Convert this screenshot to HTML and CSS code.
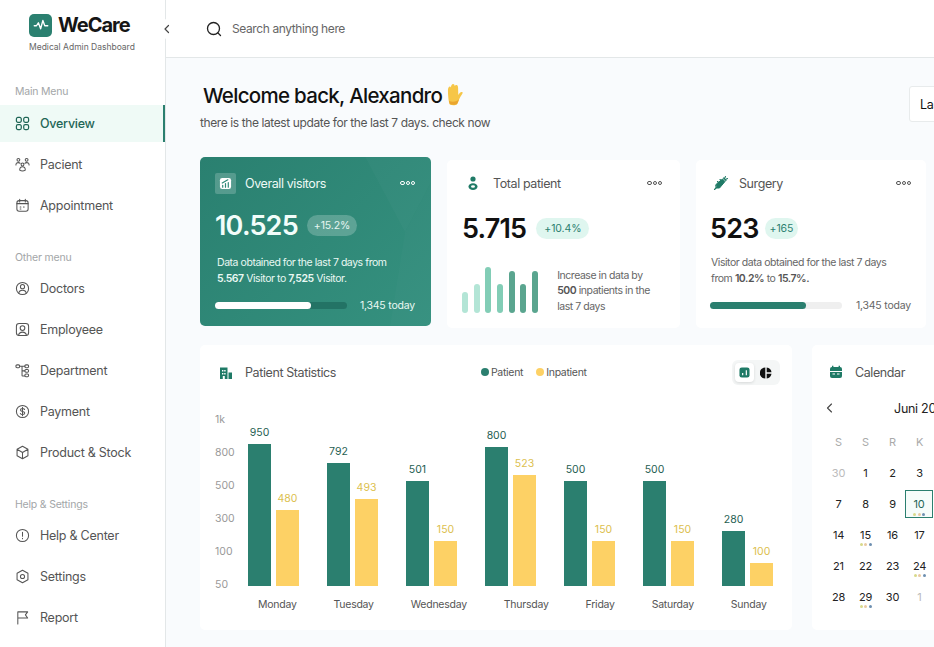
FILE: index.html
```html
<!DOCTYPE html>
<html lang="en">
<head>
  <meta charset="UTF-8" />
  <meta name="viewport" content="width=device-width, initial-scale=1.0"/>
  <title>WeCare - Medical Admin Dashboard</title>
  <link rel="stylesheet" href="styles.css">
</head>
<body>
  <div class="app">
    <aside class="sidebar">
      <div class="brand">
        <div class="brand-row">
          <span class="brand-logo">
            <svg viewBox="0 0 24 24" width="18" height="18" fill="none" stroke="#fff" stroke-width="1.8" stroke-linecap="round" stroke-linejoin="round"><path d="M3 13h3l2.500-4 3 8 3-11 2.500 7h4"/></svg>
          </span>
          <span class="brand-name">WeCare</span>
        </div>
        <div class="brand-sub">Medical Admin Dashboard</div>
      </div>

      <div class="nav-label">Main Menu</div>
      <a class="nav-item active">
        <svg class="nav-icon" viewBox="0 0 16 16"><rect x="1.500" y="1.500" width="5.200" height="5.200" rx="1.600"/><rect x="9.300" y="1.500" width="5.200" height="5.200" rx="1.600"/><rect x="1.500" y="9.300" width="5.200" height="5.200" rx="1.600"/><rect x="9.300" y="9.300" width="5.200" height="5.200" rx="1.600"/></svg>
        Overview
      </a>
      <a class="nav-item">
        <svg class="nav-icon" viewBox="0 0 16 16"><circle cx="3.600" cy="3" r="1.500"/><circle cx="12.400" cy="3" r="1.500"/><circle cx="8" cy="8" r="1.500"/><path d="M1 8.500c0-1.600 1-2.500 2.600-2.500 .8 0 1.400.2 1.900.7M15 8.500c0-1.600-1-2.500-2.600-2.500-.8 0-1.400.2-1.900.7M5 14c0-2 1.200-3.500 3-3.500s3 1.500 3 3.500c-1.800 1-4.200 1-6 0z"/></svg>
        Pacient
      </a>
      <a class="nav-item">
        <svg class="nav-icon" viewBox="0 0 16 16"><rect x="2" y="2.800" width="12" height="11.400" rx="2.400"/><path d="M5 1.300v3M11 1.300v3M2 6h12M5.500 9.500h.8M5.500 11.800h.8M9 9.500h.8"/></svg>
        Appointment
      </a>

      <div class="nav-label second">Other menu</div>
      <a class="nav-item">
        <svg class="nav-icon" viewBox="0 0 16 16"><circle cx="8" cy="8" r="6.500"/><circle cx="8" cy="6" r="2.200"/><path d="M4 13c.3-2.200 2-3.200 4-3.200s3.700 1 4 3.200"/></svg>
        Doctors
      </a>
      <a class="nav-item">
        <svg class="nav-icon" viewBox="0 0 16 16"><rect x="1.500" y="1.500" width="13" height="13" rx="3"/><circle cx="8" cy="6.500" r="2.500"/><path d="M3.800 14.300c.4-2.500 2.200-3.500 4.200-3.500s3.800 1 4.200 3.500"/></svg>
        Employeee
      </a>
      <a class="nav-item">
        <svg class="nav-icon" viewBox="0 0 16 16"><rect x="1" y="2" width="4" height="3" rx="1.200"/><rect x="10.500" y="2" width="4" height="3" rx="1.200"/><rect x="10.500" y="7" width="4" height="2.800" rx="1.200"/><rect x="10.500" y="11.800" width="4" height="2.800" rx="1.200"/><path d="M5 3.500h5.500M7.500 3.500v9.700c0 .4.300.6.600.6h2.400M7.500 8.400h3"/></svg>
        Department
      </a>
      <a class="nav-item">
        <svg class="nav-icon" viewBox="0 0 16 16"><circle cx="8" cy="8" r="6.500"/><path d="M10.200 5.800C9.800 5 9 4.700 8 4.700c-1.300 0-2.200.6-2.200 1.600 0 2.200 4.600 1.100 4.600 3.400 0 1-1 1.600-2.300 1.600-1.100 0-2-.4-2.400-1.200M8 3.600v8.800"/></svg>
        Payment
      </a>
      <a class="nav-item">
        <svg class="nav-icon" viewBox="0 0 16 16"><path d="M8 1.300l5.800 3.300v6.800L8 14.700l-5.800-3.300V4.600zM2.200 4.600L8 8l5.800-3.400M8 8v6.700"/></svg>
        Product &amp; Stock
      </a>

      <div class="nav-label second help">Help &amp; Settings</div>
      <a class="nav-item">
        <svg class="nav-icon" viewBox="0 0 16 16"><circle cx="8" cy="8" r="6.500"/><path d="M8 4.500v4.300M8 11v.4"/></svg>
        Help &amp; Center
      </a>
      <a class="nav-item">
        <svg class="nav-icon" viewBox="0 0 16 16"><path d="M8 1.300l5.800 3.300v6.800L8 14.700l-5.800-3.300V4.600z"/><circle cx="8" cy="8" r="2.200"/></svg>
        Settings
      </a>
      <a class="nav-item">
        <svg class="nav-icon" viewBox="0 0 16 16"><path d="M3 15V2h10.500l-2.400 3.200 2.400 3.300H3"/></svg>
        Report
      </a>
    </aside>

    <button class="collapse">
      <svg viewBox="0 0 10 10" width="10" height="10" fill="none" stroke="#444" stroke-width="1.200" stroke-linecap="round" stroke-linejoin="round"><path d="M6.500 1.500L3 5l3.500 3.500"/></svg>
    </button>

    <main class="main">
      <header class="topbar">
        <svg viewBox="0 0 16 16" width="16" height="16" fill="none" stroke="#222" stroke-width="1.300" stroke-linecap="round"><circle cx="7.500" cy="7.500" r="6"/><path d="M12 12l2.500 2.500"/></svg>
        <span class="search-text">Search anything here</span>
      </header>

      <div class="content">
        <div class="greeting">
          <div class="welcome">
            <h1>Welcome back, Alexandro
              <svg class="hand" viewBox="0 0 20 24"><path fill="#f6c648" d="M5 22c-.8-1.500-1.300-4-1.500-6.500-.3-3-.5-6-.4-8.500.1-2 1-3.500 2-3.500 .6 0 1 .4 1.100 1 .2-1.800 1.100-3.500 2.300-3.500 1.100 0 1.600 1 1.700 2 .5-.8 1.200-1.200 2-1 1.100.2 1.600 1.500 1.600 3.500 0 2 .2 5 .2 7 .8-1.500 2.200-3 3.400-3.200 1-.1 1.500.6 1.100 1.500-1 2-2.800 4.300-3.800 6.700-.6 1.800-1.100 3.500-2.200 5-1.500 1-5.500 1-7.500 0z"/><path fill="#eaa52f" d="M5 22c2 1 6 1 7.500 0 1.100-1.500 1.600-3.200 2.200-5-2 2.300-6 3.300-10.500 1.800 .2 1.200.5 2.300.8 3.200z"/></svg>
            </h1>
            <p>there is the latest update for the last 7 days. check now</p>
          </div>
          <button class="range">Last 7 days</button>
        </div>

        <section class="stats">
          <article class="card-visitors">
            <svg class="wave" viewBox="0 0 231 169" preserveAspectRatio="none"><path d="M160 -10L205 75 231 25V-10z" fill="#fff" opacity=".025"/><path d="M205 75L231 25V169H190z" fill="#fff" opacity=".015"/></svg>
            <div class="stat-head">
              <span class="stat-icon glass">
                <svg viewBox="0 0 14 14" width="13" height="13"><rect x="1" y="1" width="12" height="12" rx="2.500" fill="#fff"/><path d="M4 11V9M7 11V7M10 11V6M3.500 6.500L9.500 3" stroke="#2f8a78" stroke-width="1.300" stroke-linecap="round" fill="none"/></svg>
              </span>
              <span class="stat-title">Overall visitors</span>
              <span class="dots"><i></i><i></i><i></i></span>
            </div>
            <div class="stat-value">
              <strong>10.525</strong>
              <span class="pill glass-pill">+15.2%</span>
            </div>
            <p class="stat-text">Data obtained for the last 7 days from<br><b>5.567</b> Visitor to <b>7,525</b> Visitor.</p>
            <div class="stat-progress">
              <div class="track dark"><div class="fill white" style="width:73%"></div></div>
              <span>1,345 today</span>
            </div>
          </article>

          <article class="card-white patient">
            <div class="stat-head">
              <span class="stat-icon">
                <svg viewBox="0 0 14 14" width="14" height="14" fill="#1f7a66"><circle cx="7" cy="3" r="2.600"/><path d="M2.500 10.500c0-2 2-3.300 4.500-3.300s4.500 1.300 4.500 3.300S9.500 14 7 14s-4.500-1.500-4.500-3.500z"/><ellipse cx="7" cy="10.500" rx="2" ry="1.200" fill="#fff"/></svg>
              </span>
              <span class="stat-title">Total patient</span>
              <span class="dots"><i></i><i></i><i></i></span>
            </div>
            <div class="stat-value">
              <strong>5.715</strong>
              <span class="pill">+10.4%</span>
            </div>
            <div class="mini-row">
              <div class="mini-bars">
                <i style="height:21px;background:#b3e5d6"></i>
                <i style="height:29px;background:#b3e5d6"></i>
                <i style="height:46px;background:#82cdb6"></i>
                <i style="height:29px;background:#82cdb6"></i>
                <i style="height:42px;background:#5aa58f"></i>
                <i style="height:29px;background:#5aa58f"></i>
                <i style="height:42px;background:#5aa58f"></i>
              </div>
              <p class="stat-text">Increase in data by<br><b>500</b> inpatients in the<br>last 7 days</p>
            </div>
          </article>

          <article class="card-white surgery">
            <div class="stat-head">
              <span class="stat-icon">
                <svg viewBox="0 0 16 16" width="16" height="16" fill="none" stroke="#1f7a66" stroke-linecap="round"><path d="M3 9.500L9.500 4l2.500 2.500-5.500 6.500H3.500z" fill="#1f7a66" stroke-width="1"/><path d="M1.500 14.500l2-2M10.500 3l2.500 2.500M12.500 1.500l-1 2M14.500 3.500l-2 1M4.500 6.500l1 1M7 4.500l1 1" stroke-width="1.100"/></svg>
              </span>
              <span class="stat-title">Surgery</span>
              <span class="dots"><i></i><i></i><i></i></span>
            </div>
            <div class="stat-value">
              <strong>523</strong>
              <span class="pill small">+165</span>
            </div>
            <p class="stat-text">Visitor data obtained for the last 7 days<br>from <b>10.2%</b> to <b>15.7%.</b></p>
            <div class="stat-progress">
              <div class="track"><div class="fill" style="width:73%"></div></div>
              <span>1,345 today</span>
            </div>
          </article>
        </section>

        <section class="lower">
          <article class="chart-card">
            <div class="chart-head">
              <svg viewBox="0 0 14 14" width="14" height="14" fill="#1f7a66"><path d="M1 1.500h7.500V13H1z"/><path d="M9.500 6.500H13V13H9.500z"/><path d="M3 4h1.400v1.400H3zM5.200 4h1.400v1.400H5.200zM3 7h1.400v1.400H3zM5.200 7h1.400v1.400H5.200zM3.800 10h2v3h-2z" fill="#fff"/></svg>
              <span class="stat-title">Patient Statistics</span>
              <div class="legend">
                <span><i class="green"></i>Patient</span>
                <span><i class="yellow"></i>Inpatient</span>
              </div>
              <div class="toggle">
                <span class="toggle-btn on">
                  <svg viewBox="0 0 12 12" width="11" height="11"><rect x=".5" y=".5" width="11" height="11" rx="2.500" fill="#1f7a66"/><path d="M4 9V6.500M8 9V3.500" stroke="#fff" stroke-width="1.300"/></svg>
                </span>
                <span class="toggle-btn">
                  <svg viewBox="0 0 12 12" width="12" height="12" fill="#111"><path d="M5.300 .5v11A5.500 5.500 0 0 1 5.300 .5z"/><path d="M6.700 .5A5.500 5.500 0 0 1 11.500 5.200H6.700z"/><path d="M6.700 6.800h4.800a5.500 5.500 0 0 1-4.800 4.700z"/></svg>
                </span>
              </div>
            </div>

            <div class="plot">
              <div class="y-axis"><span>1k</span><span>800</span><span>500</span><span>300</span><span>100</span><span>50</span></div>
              <div class="bars">
                <div class="group">
                  <div class="bar-col"><em>950</em><div class="bar green" style="height:142px"></div></div>
                  <div class="bar-col"><em class="amber">480</em><div class="bar yellow" style="height:76px"></div></div>
                </div>
                <div class="group">
                  <div class="bar-col"><em>792</em><div class="bar green" style="height:123px"></div></div>
                  <div class="bar-col"><em class="amber">493</em><div class="bar yellow" style="height:87px"></div></div>
                </div>
                <div class="group">
                  <div class="bar-col"><em>501</em><div class="bar green" style="height:105px"></div></div>
                  <div class="bar-col"><em class="amber">150</em><div class="bar yellow" style="height:45px"></div></div>
                </div>
                <div class="group">
                  <div class="bar-col"><em>800</em><div class="bar green" style="height:139px"></div></div>
                  <div class="bar-col"><em class="amber">523</em><div class="bar yellow" style="height:111px"></div></div>
                </div>
                <div class="group">
                  <div class="bar-col"><em>500</em><div class="bar green" style="height:105px"></div></div>
                  <div class="bar-col"><em class="amber">150</em><div class="bar yellow" style="height:45px"></div></div>
                </div>
                <div class="group">
                  <div class="bar-col"><em>500</em><div class="bar green" style="height:105px"></div></div>
                  <div class="bar-col"><em class="amber">150</em><div class="bar yellow" style="height:45px"></div></div>
                </div>
                <div class="group">
                  <div class="bar-col"><em>280</em><div class="bar green" style="height:55px"></div></div>
                  <div class="bar-col"><em class="amber">100</em><div class="bar yellow" style="height:23px"></div></div>
                </div>
              </div>
            </div>
            <div class="days">
              <span>Monday</span><span>Tuesday</span><span>Wednesday</span><span>Thursday</span><span>Friday</span><span>Saturday</span><span>Sunday</span>
            </div>
          </article>

          <article class="calendar-card">
            <div class="cal-head">
              <svg viewBox="0 0 14 14" width="14" height="14" fill="#1f7a66"><path d="M3 .8h1.400v2H3zM9.600 .8H11v2H9.600z"/><rect x="1" y="2" width="12" height="11" rx="2"/><path d="M1 6h12v.9H1zM3.500 8.500h2.500v1H3.500zM8 8.500h2.500v1H8z" fill="#fff"/></svg>
              <span class="stat-title">Calendar</span>
            </div>
            <div class="cal-month">
              <svg viewBox="0 0 10 10" width="10" height="10" fill="none" stroke="#444" stroke-width="1.100" stroke-linecap="round" stroke-linejoin="round"><path d="M6.500 1L2.500 5l4 4"/></svg>
              <span>Juni 2024</span>
              <svg viewBox="0 0 10 10" width="10" height="10" fill="none" stroke="#444" stroke-width="1.100" stroke-linecap="round" stroke-linejoin="round"><path d="M3.500 1l4 4-4 4"/></svg>
            </div>
            <div class="cal-grid">
              <span class="wd">S</span><span class="wd">S</span><span class="wd">R</span><span class="wd">K</span><span class="wd">J</span><span class="wd">S</span><span class="wd">M</span>
              <span class="off">30</span><span>1</span><span>2</span><span>3</span><span>4</span><span>5</span><span>6</span>
              <span>7</span><span>8</span><span>9</span><span class="today">10<u class="marks"><i></i><i></i><i></i></u></span><span>11</span><span>12</span><span>13</span>
              <span>14</span><span>15<u class="marks"><i></i><i></i><i></i></u></span><span>16</span><span>17</span><span>18</span><span>19</span><span>20</span>
              <span>21</span><span>22</span><span>23</span><span>24<u class="marks"><i></i><i></i><i></i></u></span><span>25</span><span>26</span><span>27</span>
              <span>28</span><span>29<u class="marks"><i></i><i></i><i></i></u></span><span>30</span><span class="off">1</span><span class="off">2</span><span class="off">3</span><span class="off">4</span>
            </div>
          </article>
        </section>
      </div>
    </main>
  </div>
</body>
</html>
```

FILE: styles.css
```css
* {
  box-sizing: border-box;
  font-family: 'Inter', 'Noto Sans', sans-serif;
}

body {
  margin: 0;
  background: #f9fbfd;
}

.app {
  position: relative;
  display: flex;
  width: 934px;
  height: 647px;
  overflow: hidden;
}

/* sidebar */
.sidebar {
  flex: 0 0 166px;
  background: #fff;
  border-right: 1px solid #e3e7e8;
}

.brand {
  padding: 13px 0 0 29px;
  height: 85px;
}

.brand-row {
  display: flex;
  align-items: center;
  gap: 6px;
  height: 24px;
}

.brand-logo {
  display: flex;
  align-items: center;
  justify-content: center;
  width: 23px;
  height: 23px;
  border-radius: 5px;
  background: #2b8070;
}

.brand-name {
  font-size: 20px;
  font-weight: 700;
  letter-spacing: -1px;
  color: #161616;
}

.brand-sub {
  margin-top: 4px;
  font-size: 8.5px;
  line-height: 12px;
  color: #666;
  white-space: nowrap;
}

.nav-label {
  padding-left: 15px;
  font-size: 10.5px;
  line-height: 14px;
  letter-spacing: -0.2px;
  color: #a3a6a8;
  margin-bottom: 6px;
}

.nav-label.second {
  margin-top: 26.500px;
  margin-bottom: 5px;
}

.nav-label.help {
  margin-top: 27.500px;
}

.nav-item {
  display: flex;
  align-items: center;
  gap: 10px;
  height: 37px;
  margin: 4px 0;
  padding-left: 15px;
  font-size: 12.5px;
  letter-spacing: -0.25px;
  color: #555;
}

.nav-item.active {
  background: #effaf6;
  border-right: 2px solid #2b7f6f;
  color: #1f6656;
  font-weight: 500;
}

.nav-icon {
  width: 15px;
  height: 15px;
  fill: none;
  stroke: currentColor;
  stroke-width: 1.100;
  stroke-linecap: round;
  stroke-linejoin: round;
}

.active .nav-icon {
  stroke-width: 1.300;
}

.collapse {
  position: absolute;
  left: 157px;
  top: 19px;
  width: 20px;
  height: 20px;
  padding: 0;
  display: flex;
  align-items: center;
  justify-content: center;
  border: none;
  border-radius: 50%;
  background: #fff;
}

/* main */
.main {
  flex: 1;
  min-width: 0;
}

.topbar {
  display: flex;
  align-items: center;
  gap: 10px;
  height: 58px;
  padding-left: 40px;
  background: #fff;
  border-bottom: 1px solid #e3e7e8;
}

.search-text {
  font-size: 12px;
  letter-spacing: -0.4px;
  color: #666;
}

.content {
  padding: 24px 0 0 34px;
}

.greeting {
  display: flex;
  align-items: flex-start;
  height: 75px;
}

.welcome {
  flex: 0 0 709px;
}

.welcome h1 {
  display: flex;
  align-items: center;
  gap: 3px;
  margin: 0 0 0 3px;
  font-size: 20.5px;
  line-height: 28px;
  font-weight: 500;
  letter-spacing: -0.7px;
  color: #111;
}

.hand {
  width: 19px;
  height: 23px;
  margin-top: -3px;
}

.welcome p {
  margin: 5px 0 0;
  font-size: 12px;
  line-height: 16px;
  letter-spacing: -0.4px;
  color: #555;
}

.range {
  flex: 0 0 100px;
  height: 36px;
  margin-top: 4px;
  padding: 0 0 0 10px;
  text-align: left;
  font-size: 12.5px;
  letter-spacing: -0.3px;
  color: #111;
  background: #fff;
  border: 1px solid #e8ebec;
  border-radius: 3px;
}

.stats {
  display: flex;
  gap: 16px;
}

.card-visitors {
  position: relative;
  flex: 0 0 231px;
  height: 169px;
  padding: 16px 16px 0 15px;
  overflow: hidden;
  border-radius: 5px;
  color: #f2fbf8;
  background: linear-gradient(135deg, #2a8070, #35917f);
}

.wave {
  position: absolute;
  inset: 0;
  width: 100%;
  height: 100%;
}

.card-white {
  height: 168px;
  margin-top: 3px;
  padding: 13px 15px 0 15px;
  background: #fff;
  border-radius: 5px;
}

.patient {
  flex: 0 0 233px;
  padding-right: 18px;
}

.surgery {
  flex: 0 0 230px;
  padding-left: 14px;
}

.stat-head {
  position: relative;
  display: flex;
  align-items: center;
  gap: 9px;
  height: 20px;
}

.patient .stat-head {
  gap: 10px;
}

.surgery .stat-head {
  gap: 8px;
}

.stat-icon {
  display: flex;
  align-items: center;
  justify-content: center;
  width: 21px;
  height: 21px;
  border-radius: 2px;
}

.stat-icon.glass {
  background: rgba(255, 255, 255, 0.2);
}

.stat-title {
  font-size: 12.5px;
  letter-spacing: -0.4px;
  color: #555;
}

.card-visitors .stat-title {
  color: #eefaf6;
}

.dots {
  display: flex;
  gap: 1px;
  margin-left: auto;
}

.dots i {
  width: 4.200px;
  height: 4.200px;
  border: 1px solid #555;
  border-radius: 50%;
}

.card-visitors .dots i {
  border-color: #fff;
}

.stat-value {
  display: flex;
  align-items: center;
  gap: 9px;
  height: 34px;
  margin-top: 15px;
}

.card-white .stat-value {
  margin-top: 18px;
}

.patient .stat-value {
  gap: 10px;
}

.stat-value strong {
  font-size: 27px;
  font-weight: 600;
  letter-spacing: -0.8px;
  color: #111;
}

.card-visitors .stat-value strong {
  color: #f2fdfa;
}

.pill {
  display: inline-block;
  padding: 0 8px;
  height: 21px;
  line-height: 21px;
  font-size: 10.5px;
  letter-spacing: -0.1px;
  color: #2b7f6f;
  background: #dff6ef;
  border-radius: 11px;
}

.pill.small {
  padding: 0 5px;
  margin-left: -3px;
}

.glass-pill {
  padding: 0 7px;
  color: #e6f6f1;
  background: rgba(255, 255, 255, 0.22);
}

.stat-text {
  margin: 13px 0 0 1px;
  font-size: 10.5px;
  line-height: 16px;
  letter-spacing: -0.45px;
  color: #666;
  white-space: nowrap;
}

.surgery .stat-text {
  margin-top: 10px;
}

.stat-text b {
  font-weight: 600;
  color: #555;
}

.card-visitors .stat-text {
  margin-left: 2px;
}

.card-visitors .stat-text,
.card-visitors .stat-text b {
  color: #e9f8f3;
}

.stat-progress {
  display: flex;
  align-items: center;
  justify-content: space-between;
  margin-top: 12px;
  font-size: 10.5px;
  letter-spacing: -0.2px;
  color: #666;
}

.card-visitors .stat-progress {
  color: #e9f8f3;
}

.track {
  width: 132px;
  height: 7px;
  border-radius: 4px;
  background: #efefef;
}

.track.dark {
  background: #237365;
}

.fill {
  height: 100%;
  border-radius: 4px;
  background: #2b7f6f;
}

.fill.white {
  background: #fff;
}

.mini-row {
  display: flex;
  align-items: flex-end;
  gap: 19px;
  margin-top: 22px;
}

.mini-row .stat-text {
  margin: 0 0 -1px;
  line-height: 15.500px;
}

.mini-bars {
  display: flex;
  align-items: flex-end;
  gap: 5.700px;
}

.mini-bars i {
  width: 6px;
  border-radius: 3px;
}

/* chart */
.lower {
  display: flex;
  gap: 20px;
  margin-top: 17px;
}

.chart-card {
  flex: 0 0 592px;
  height: 285px;
  padding: 15px 12px 0 15px;
  background: #fff;
  border-radius: 5px;
}

.chart-head {
  display: flex;
  align-items: center;
  gap: 12px;
  height: 25px;
  padding-left: 4px;
}

.legend {
  display: flex;
  gap: 13px;
  margin-left: 133px;
  font-size: 10.5px;
  letter-spacing: -0.3px;
  color: #555;
}

.legend i {
  display: inline-block;
  width: 8px;
  height: 8px;
  margin-right: 2px;
  border-radius: 50%;
}

.legend .green {
  background: #2b7f6f;
}

.legend .yellow {
  background: #fdd165;
}

.toggle {
  display: flex;
  align-items: center;
  gap: 2px;
  margin-left: auto;
  width: 48px;
  height: 25px;
  padding-left: 3px;
  background: #f4f6f6;
  border-radius: 6px;
}

.toggle-btn {
  display: flex;
  align-items: center;
  justify-content: center;
  width: 19px;
  height: 19px;
  border-radius: 4px;
}

.toggle-btn.on {
  background: #fff;
  box-shadow: 0 1px 3px rgba(0, 0, 0, 0.12);
}

.plot {
  display: flex;
  height: 179px;
  margin-top: 28px;
}

.y-axis {
  flex: 0 0 33px;
  display: flex;
  flex-direction: column;
  justify-content: space-between;
  font-size: 10.5px;
  line-height: 14px;
  color: #999;
}

.bars {
  display: flex;
  align-items: flex-end;
  gap: 28px;
  padding-bottom: 6px;
}

.group {
  display: flex;
  align-items: flex-end;
  gap: 5px;
}

.bar-col {
  display: flex;
  flex-direction: column;
  align-items: center;
  width: 23px;
}

.bar-col em {
  margin-bottom: 4px;
  font-style: normal;
  font-size: 10.5px;
  line-height: 14px;
  color: #1f5e52;
}

.bar-col em.amber {
  color: #dcc04e;
}

.bar {
  width: 100%;
}

.bar.green {
  background: #2b7f6f;
}

.bar.yellow {
  background: #fdd165;
}

.days {
  display: flex;
  gap: 37px;
  margin-top: 6px;
  padding-left: 43px;
  font-size: 10.5px;
  line-height: 14px;
  letter-spacing: -0.25px;
  color: #555;
}

/* calendar */
.calendar-card {
  flex: 0 0 214px;
  height: 285px;
  padding: 17px 12px 0 13px;
  background: #fff;
  border-radius: 5px;
}

.cal-head {
  display: flex;
  align-items: center;
  gap: 12px;
  height: 20px;
  padding-left: 4px;
}

.cal-month {
  display: flex;
  align-items: center;
  justify-content: space-between;
  height: 20px;
  margin-top: 16px;
  font-size: 12.5px;
  letter-spacing: -0.3px;
  color: #222;
}

.cal-month span {
  margin-left: 6px;
}

.cal-grid {
  display: grid;
  grid-template-columns: repeat(7, 27px);
  grid-auto-rows: 31px;
  margin-top: 8px;
  font-size: 11px;
  letter-spacing: -0.2px;
  color: #222;
}

.cal-grid span {
  position: relative;
  display: flex;
  align-items: center;
  justify-content: center;
}

.cal-grid .wd {
  color: #aaa;
}

.cal-grid .off {
  color: #bbb;
}

.cal-grid .today {
  width: 28px;
  height: 28px;
  margin: 2px 0 0 -1px;
  background: #f6fcfa;
  border: 1px solid #2b7f6f;
  color: #1f6656;
}

.marks {
  position: absolute;
  left: 50%;
  bottom: 4px;
  display: flex;
  gap: 1.500px;
  transform: translateX(-50%);
}

.today .marks {
  bottom: 1px;
}

.marks i {
  width: 3px;
  height: 3px;
  border-radius: 50%;
  background: #d8d98a;
}

.marks i:nth-child(2) {
  background: #e9c9a2;
}

.marks i:nth-child(3) {
  background: #6e8fb0;
}
```
